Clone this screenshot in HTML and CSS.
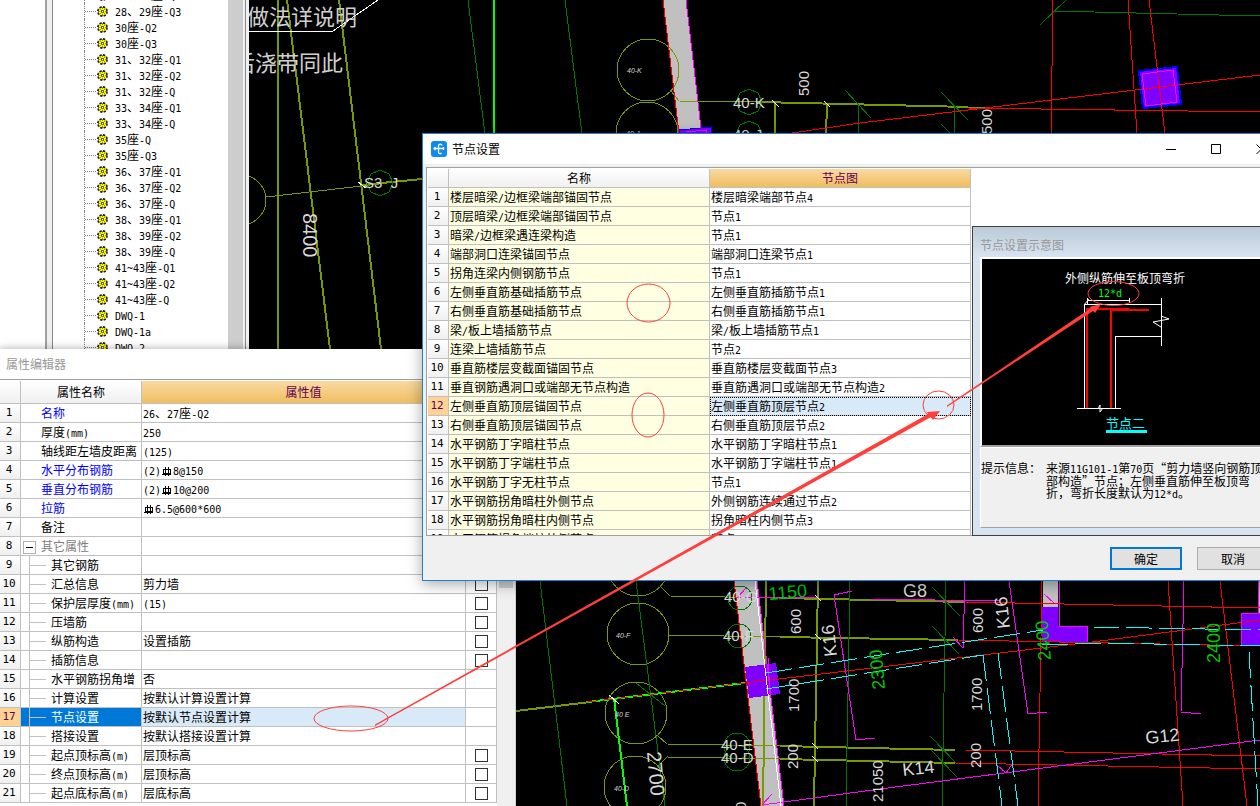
FILE: index.html
```html
<!DOCTYPE html>
<html lang="zh-CN">
<head>
    <meta charset="UTF-8">
    <meta name="viewport" content="width=device-width, initial-scale=1.0">
    <title>节点设置</title>
    <link rel="stylesheet" href="styles.css">
</head>
<body>
    <svg class="symbols" width="0" height="0">
        <symbol id="gear" viewBox="0 0 11 11">
            <circle cx="5.5" cy="5.5" r="4.5" fill="#ffff00" stroke="#222" stroke-width="2" stroke-dasharray="2.2 1.33"/>
            <circle cx="5.5" cy="5.5" r="3.6" fill="#ffff00"/>
            <path d="M5.5 1v9M1 5.5h9M2.500 2.500l6 6M8.500 2.500l-6 6" stroke="#6a6a00" stroke-width=".7"/>
            <circle cx="5.5" cy="5.5" r="2.4" fill="#ffff00"/>
            <rect x="4.5" y="4.5" width="2" height="2" fill="#fff" stroke="#444" stroke-width=".8"/>
        </symbol>
        <symbol id="rebar" viewBox="0 0 10 10">
            <path d="M1.5 2.5h7v4h-7zM3.5 0v9M6.500 0v9M0 7.500h9" fill="none" stroke="#000" shape-rendering="crispEdges"/>
        </symbol>
    </svg>

    <!-- drawing area -->
    <svg class="drawing" width="100%" height="100%">
        <!-- walls -->
        <g fill="#c0c0c0">
            <path d="M663 0L686 0L701 128L679 133Z"/>
            <path d="M734 581H757L784 806H761Z"/>
            <path d="M1043 560H1058V607H1043ZM1258 560H1270V613H1258Z"/>
        </g>

        <!-- axis lines -->
        <g class="olive">
            <path class="thick" d="M278 0V349M287 0L330 349M339 0L381 349"/>
            <circle cx="241" cy="200" r="25"/>
            <path d="M266 197L422 179"/>
            <path class="thick" d="M361 185L422 179"/>
            <circle cx="648" cy="70" r="31"/>
            <circle cx="647" cy="133" r="31"/>
            <path d="M671 91L679 101L760 102M968 107L988 107"/>
            <path class="thick" d="M760 102L968 107M775 103V134M827 105L826 134"/>
            <circle cx="638" cy="565" r="31"/>
            <circle cx="638" cy="634" r="31"/>
            <circle cx="636" cy="713" r="31"/>
            <circle cx="635" cy="787" r="31"/>
            <path d="M661 587L670 596L780 598M668 635L780 637M658 736L667 744L780 746M658 766L667 757L780 759"/>
            <path class="thick" d="M780 598L965 602M780 637L958 640M780 746L955 750M780 759L955 763"/>
            <path class="thick" d="M516 711L590 702M766 581L763 806M818 581L814 806"/>
        </g>

        <!-- grid -->
        <g class="green">
            <path d="M468 0L485 134M565 0L582 134M858 105V134M955 107L954 134"/>
            <path d="M845 90L871 118M941 92L968 120M941 124L951 134"/>
            <path d="M1053 11L1260 16M1040 25L1066 0"/>
            <path d="M540 581L567 806M636 581L665 806M850 581L846 806M946 581L942 806"/>
            <path d="M932 587L960 616M932 626L959 654M930 736L957 764M931 750L957 777M636 683L665 706"/>
            <path d="M380 170L389 174L393 183L389 192L380 196L371 192L367 183L371 174Z"/>
            <path d="M749 89L758 93L762 102L758 111L749 115L740 111L736 102L740 93Z"/>
            <path d="M749 121L758 125L762 134H736L740 125Z"/>
            <circle cx="740" cy="598" r="12"/>
            <circle cx="739" cy="636" r="12"/>
            <circle cx="737" cy="746" r="13"/>
            <circle cx="737" cy="758" r="13"/>
        </g>
        <path class="lime" d="M494 0V134M614 698L627 806"/>

        <!-- columns -->
        <g fill="#7f00ff">
            <path d="M1139 71L1177 67L1181 104L1143 108Z" stroke="#0000ff" stroke-width="2"/>
            <path d="M679 130L711 127V140H679Z" stroke="#0000ff"/>
            <path d="M745 667L776 663L780 694L749 698Z"/>
            <path d="M1042 607H1058V626H1087V642H1042Z"/>
            <path d="M1241 613H1260V646H1241Z"/>
        </g>

        <g class="red">
            <path d="M792 133L860 123L1260 75M968 108L1260 112M1053 0L1051 134M1128 0L1137 134M1149 0L1165 134"/>
            <path d="M745 683L1000 653L1100 641L1200 628L1260 620"/>
            <path d="M965 602L1260 608M958 640L1260 646M965 750L1260 756M955 763L1260 769"/>
            <path d="M1042 581L1038 806M1168 581L1183 806M1220 581L1247 806"/>
            <path d="M663 0L679 133M734 581L761 806"/>
        </g>
        <path class="lime" d="M588 702L745 683"/>
        <path class="red" stroke-dasharray="10 5" d="M588 702L745 683"/>

        <g class="magenta">
            <path d="M1142 74L1173 70L1177 102L1146 106Z"/>
            <path d="M686 0L701 128M686 132L706 130V134M757 581L784 806"/>
            <path d="M737 598L820 597M737 598L746 588M852 591L834 595L856 740L875 738"/>
            <path d="M762 805L880 789L1260 740M762 805L772 794"/>
            <path d="M870 599L1000 601M965 581L963 648L953 637M1009 581L1028 714L1047 712"/>
            <path d="M1184 581L1181 712L1201 714M997 765L1006 773L1013 763M1044 594L1054 603"/>
            <path d="M1059 581V626H1087V642M1241 646V613H1258V581M768 658L770 694"/>
        </g>

        <g class="cyan">
            <path d="M766 673L880 655L1043 630M766 689L880 671L983 655"/>
            <path d="M1093 627L1260 630M1042 645L1100 643L1260 646"/>
            <path d="M983 655L1002 806M998 653L1018 806M1249 652L1258 806"/>
        </g>

        <g class="white">
            <path d="M249 31H333L378 0M755 581L781 806"/>
            <path d="M358 182L366 188M772 100L779 107M824 101L830 107M609 695L619 704"/>
            <path d="M815 595L821 601M815 634L821 640M812 743L818 749M812 756L818 762"/>
        </g>

        <!-- drawing labels -->
        <g class="note">
            <text x="247" y="25">做法详说明</text>
            <text x="233" y="71">后浇带同此</text>
        </g>
        <g class="dim">
            <text x="364" y="188">S3&#160;&#160;J</text>
            <text x="733" y="108">40-K</text>
            <text x="733" y="140">40-J</text>
            <text x="724" y="602">40-G</text>
            <text x="723" y="641">40-F</text>
            <text x="721" y="750">40-E</text>
            <text x="721" y="763">40-D</text>
            <text transform="translate(809 96) rotate(-90)">500</text>
            <text transform="translate(992 134) rotate(-90)">500</text>
            <text transform="translate(801 634) rotate(-90)">600</text>
            <text transform="translate(799 712) rotate(-90)">1700</text>
            <text transform="translate(798 769) rotate(-90)">200</text>
            <text transform="translate(883 802) rotate(-90)">21050</text>
            <text transform="translate(983 633) rotate(-90)">600</text>
            <text transform="translate(982 711) rotate(-90)">1700</text>
            <text transform="translate(981 768) rotate(-90)">200</text>
            <text transform="translate(746 810) rotate(-90)">0</text>
        </g>
        <g class="dim mid">
            <text x="903" y="597">G8</text>
            <text transform="translate(1146 744) rotate(-6)">G12</text>
            <text transform="translate(903 776) rotate(-6)">K14</text>
            <text transform="translate(837 656) rotate(-96)">K16</text>
            <text transform="translate(1010 628) rotate(-96)">K16</text>
        </g>
        <g class="dim big">
            <text transform="translate(303 213) rotate(90)">8400</text>
            <text transform="translate(647 752) rotate(85)">2700</text>
        </g>
        <g class="dim mid lively">
            <text transform="translate(769 600) rotate(-5)">1150</text>
            <text transform="translate(885 689) rotate(-95)">2300</text>
            <text transform="translate(1051 660) rotate(-95)">2400</text>
            <text transform="translate(1220 663) rotate(-90)">2400</text>
        </g>
        <g class="dim tiny">
            <text x="627" y="73">40-K</text>
            <text x="626" y="136">40-J</text>
            <text x="616" y="638">40-F</text>
            <text x="615" y="717">40 E</text>
            <text x="614" y="791">40-D</text>
        </g>
    </svg>

    <!-- component list -->
    <aside class="sidebar">
        <div class="gutter"></div>
        <div class="splitter"></div>
        <ul class="tree" id="tree"></ul>
        <div class="scroll-thumb"></div>
        <div class="splitter right"></div>
    </aside>

    <!-- property editor -->
    <section class="props">
        <h2 class="props-title">属性编辑器</h2>
        <div class="props-body">
            <table class="grid props-grid">
                <colgroup><col class="c-no"><col class="c-name"><col><col class="c-check"></colgroup>
                <thead><tr><th></th><th>属性名称</th><th class="active">属性值</th><th></th></tr></thead>
                <tbody id="props"></tbody>
            </table>
            <div class="scroll"><div class="scroll-bar"></div></div>
        </div>
    </section>

    <!-- node settings dialog -->
    <section class="dialog">
        <header class="title-bar">
            <svg class="logo" width="16" height="16" viewBox="0 0 16 16">
                <rect width="16" height="16" rx="3" fill="#0c8cf0"/>
                <path d="M11 4.500C10.500 2.500 7.500 2.500 7.500 5V11C7.500 13 9.500 13 10.500 12M3 7.500H13M4.500 6L3 7.500L4.500 9M12.500 6V9" fill="none" stroke="#fff" stroke-width="1.300"/>
            </svg>
            <h1>节点设置</h1>
            <button class="win-btn" aria-label="最小化"><svg width="11" height="11"><path d="M0 5.500H10"/></svg></button>
            <button class="win-btn" aria-label="最大化"><svg width="11" height="11"><path d="M.5 .5H9.500V9.500H.5Z"/></svg></button>
            <button class="win-btn" aria-label="关闭"><svg width="11" height="11"><path d="M.5 .5L10 10M10 .5L.5 10"/></svg></button>
        </header>
        <div class="node-panel">
            <table class="grid node-grid">
                <colgroup><col class="c-no"><col class="c-half"><col class="c-half"></colgroup>
                <thead><tr><th></th><th>名称</th><th class="active">节点图</th></tr></thead>
                <tbody id="nodes"></tbody>
            </table>
        </div>
        <footer class="actions">
            <button class="btn primary">确定</button>
            <button class="btn">取消</button>
        </footer>

        <!-- preview window -->
        <div class="preview">
            <h2>节点设置示意图</h2>
            <svg class="figure" width="100%" height="190" viewBox="982 259 280 186" preserveAspectRatio="xMinYMin meet">
                <g fill="none" stroke="#fff" shape-rendering="crispEdges">
                    <path d="M1084.500 408V304.500H1161M1161.500 298V346M1161 336.500H1115.500V408M1077 408.500H1121"/>
                    <path d="M1087 300.500H1130M1087.500 298V304M1129.500 298V303"/>
                </g>
                <path d="M1161 316L1169 319L1153 322L1161 327M1098 409L1100 405V412L1103 408M1084 305L1089 299" fill="none" stroke="#fff"/>
                <path d="M1087 408V309H1129M1111 408V310H1149" fill="none" stroke="#f00" stroke-width="2" shape-rendering="crispEdges"/>
                <text x="1065" y="283" fill="#fff">外侧纵筋伸至板顶弯折</text>
                <text class="en" x="1098" y="297" fill="#0f0">12*d</text>
                <text class="caption" x="1106" y="428" fill="#0ff">节点二</text>
                <path d="M1106 430H1147V433H1106Z" fill="#0ff"/>
            </svg>
            <div class="tips">
                <span class="tips-label">提示信息：</span>
                <p id="tip">来源11G101-1第70页“剪力墙竖向钢筋顶
部构造”节点；左侧垂直筋伸至板顶弯
折，弯折长度默认为12*d。</p>
            </div>
        </div>
    </section>

    <!-- red pen marks -->
    <svg class="marks" width="100%" height="100%">
        <g fill="none" stroke="#ff3f3b" stroke-width="1">
            <ellipse cx="648.500" cy="303" rx="21.500" ry="19"/>
            <ellipse cx="648" cy="415" rx="16" ry="22"/>
            <ellipse cx="938.500" cy="405" rx="15.500" ry="14"/>
            <ellipse cx="351" cy="718.500" rx="37" ry="12.500"/>
            <ellipse cx="1113.500" cy="293.500" rx="25.500" ry="12"/>
        </g>
        <g fill="#ff3f3b">
            <path d="M375 724.500L928 414L927 412L940 411L933 420L931 417L375 726Z"/>
            <path d="M947 405.500L1091 308L1089 307L1101 304L1095 313L1093 311L947 407Z"/>
        </g>
    </svg>

    <script>
        const treeItems = [
            '28、29座-Q2', '28、29座-Q3', '30座-Q2', '30座-Q3', '31、32座-Q1', '31、32座-Q2', '31、32座-Q',
            '33、34座-Q1', '33、34座-Q', '35座-Q', '35座-Q3', '36、37座-Q1', '36、37座-Q2', '36、37座-Q',
            '38、39座-Q1', '38、39座-Q2', '38、39座-Q', '41~43座-Q1', '41~43座-Q2', '41~43座-Q',
            'DWQ-1', 'DWQ-1a', 'DWQ-2'
        ];

        // name, value, kind of name, has a check box
        const props = [
            ['名称', '26、27座-Q2', 'key', 0],
            ['厚度(mm)', '250', '', 0],
            ['轴线距左墙皮距离', '(125)', '', 1],
            ['水平分布钢筋', '(2)ф8@150', 'key', 1],
            ['垂直分布钢筋', '(2)ф10@200', 'key', 1],
            ['拉筋', 'ф6.5@600*600', 'key', 1],
            ['备注', '', '', 1],
            ['其它属性', '', 'group', 0],
            ['其它钢筋', '', 'child', 0],
            ['汇总信息', '剪力墙', 'child', 1],
            ['保护层厚度(mm)', '(15)', 'child', 1],
            ['压墙筋', '', 'child', 1],
            ['纵筋构造', '设置插筋', 'child', 1],
            ['插筋信息', '', 'child', 1],
            ['水平钢筋拐角增', '否', 'child', 0],
            ['计算设置', '按默认计算设置计算', 'child', 0],
            ['节点设置', '按默认节点设置计算', 'child', 0],
            ['搭接设置', '按默认搭接设置计算', 'child', 0],
            ['起点顶标高(m)', '层顶标高', 'child', 1],
            ['终点顶标高(m)', '层顶标高', 'child', 1],
            ['起点底标高(m)', '层底标高', 'child', 1]
        ];

        const nodes = [
            ['楼层暗梁/边框梁端部锚固节点', '楼层暗梁端部节点4'],
            ['顶层暗梁/边框梁端部锚固节点', '节点1'],
            ['暗梁/边框梁遇连梁构造', '节点1'],
            ['端部洞口连梁锚固节点', '端部洞口连梁节点1'],
            ['拐角连梁内侧钢筋节点', '节点1'],
            ['左侧垂直筋基础插筋节点', '左侧垂直筋插筋节点1'],
            ['右侧垂直筋基础插筋节点', '右侧垂直筋插筋节点1'],
            ['梁/板上墙插筋节点', '梁/板上墙插筋节点1'],
            ['连梁上墙插筋节点', '节点2'],
            ['垂直筋楼层变截面锚固节点', '垂直筋楼层变截面节点3'],
            ['垂直钢筋遇洞口或端部无节点构造', '垂直筋遇洞口或端部无节点构造2'],
            ['左侧垂直筋顶层锚固节点', '左侧垂直筋顶层节点2'],
            ['右侧垂直筋顶层锚固节点', '右侧垂直筋顶层节点2'],
            ['水平钢筋丁字暗柱节点', '水平钢筋丁字暗柱节点1'],
            ['水平钢筋丁字端柱节点', '水平钢筋丁字端柱节点1'],
            ['水平钢筋丁字无柱节点', '节点1'],
            ['水平钢筋拐角暗柱外侧节点', '外侧钢筋连续通过节点2'],
            ['水平钢筋拐角暗柱内侧节点', '拐角暗柱内侧节点3'],
            ['水平钢筋拐角端柱外侧节点', '节点3']
        ];

        // latin letters and digits take half the width of a Chinese character
        function format(text) {
            return text
                .replace(/[\x21-\x7e]+/g, s => `<span class="en">${s}</span>`)
                .replace(/ф/g, '<svg class="rebar" width="10" height="10"><use href="#rebar"/></svg>');
        }

        document.getElementById('tree').innerHTML = treeItems.map(t =>
            `<li><svg class="gear" width="11" height="11"><use href="#gear"/></svg><span>${format(t)}</span></li>`).join('');

        document.getElementById('props').innerHTML = props.map(([name, value, kind, check], i) => `
            <tr class="${i === 16 ? 'selected' : ''}">
                <th class="en">${i + 1}</th>
                <td class="name ${kind}">${kind === 'group' ? '<button class="fold" aria-label="折叠"></button>' : ''}${format(name)}</td>
                <td class="value">${format(value)}</td>
                <td class="check">${check ? `<input type="checkbox" aria-label="${name}">` : ''}</td>
            </tr>`).join('');

        document.getElementById('nodes').innerHTML = nodes.map(([name, value], i) => `
            <tr class="${i === 11 ? 'selected' : ''}">
                <th class="en">${i + 1}</th><td class="name">${format(name)}</td><td class="value">${format(value)}</td>
            </tr>`).join('');

        const tip = document.getElementById('tip');
        tip.innerHTML = format(tip.textContent);
    </script>
</body>
</html>
```
FILE: styles.css
```css
* {
    box-sizing: border-box;
}

body {
    margin: 0;
    height: 100vh;
    overflow: hidden;
    position: relative;
    background: #000;
    color: #000;
    font-family: "Noto Sans CJK SC", sans-serif;
    font-size: 12px;
    line-height: 16px;
}

h1, h2, p, ul {
    margin: 0;
    padding: 0;
    font-size: 12px;
    font-weight: normal;
}

button {
    font-family: inherit;
    font-size: 12px;
    padding: 0;
}

.en {
    font-family: "DejaVu Sans Mono", monospace;
    font-size: 10px;
    line-height: 10px;
}

.symbols, .drawing, .marks {
    position: absolute;
    left: 0;
    top: 0;
}

.marks {
    pointer-events: none;
}

/* drawing */
.drawing path, .drawing circle {
    shape-rendering: crispEdges;
}

.olive, .green, .red, .magenta, .cyan, .white, .lime {
    fill: none;
    stroke-width: 1;
}

.olive { stroke: #789a00; }
.green { stroke: #007800; }
.red { stroke: #ff0000; }
.magenta { stroke: #ff00ff; }
.white { stroke: #ffffff; }

.olive .thick {
    stroke-width: 2;
}

.lime {
    stroke: #00ff00;
    stroke-width: 2;
}

.cyan {
    stroke: #00ffff;
    stroke-dasharray: 26 7;
}

.note {
    fill: #d0d0d0;
    font-size: 22px;
}

.dim {
    fill: #d8d8d8;
    font-family: "Liberation Sans", sans-serif;
    font-size: 15px;
}

.dim.mid { font-size: 18px; }
.dim.big { font-size: 20px; }
.dim.lively { fill: #00c800; }

.dim.tiny {
    font-size: 7px;
    font-style: italic;
}

/* component tree */
.sidebar {
    position: absolute;
    left: 0;
    top: 0;
    width: 249px;
    height: 349px;
    display: flex;
    overflow: hidden;
    background: #fff;
}

.gutter {
    width: 45px;
}

.splitter {
    width: 8px;
    background: #f0f0f0;
    border-left: 2px solid #a0a0a0;
    border-right: 1px solid #828790;
}

.splitter.right {
    width: 6px;
    border-left: 2px solid #f0f0f0;
    border-right: 3px solid #f0f0f0;
    background: #828790;
}

.tree {
    flex: 1;
    list-style: none;
    margin-top: -13px;
    padding-left: 31px;
}

.tree li {
    height: 16px;
    display: flex;
    align-items: center;
    border-left: 1px dotted #808080;
    white-space: nowrap;
}

.tree li::before {
    content: "";
    width: 11px;
    border-top: 1px dotted #808080;
}

.gear {
    margin: 0 7px 0 1px;
}

.scroll-thumb {
    width: 15px;
    background: #cdcdcd;
}

/* grids */
.grid {
    border-collapse: separate;
    border-spacing: 0;
    table-layout: fixed;
}

.grid th, .grid td {
    height: 19px;
    padding: 0 0 0 2px;
    line-height: 16px;
    border-right: 1px solid #c0c0c0;
    border-bottom: 1px solid #c0c0c0;
    text-align: left;
    font-weight: normal;
    white-space: nowrap;
    overflow: hidden;
}

.grid td {
    padding-left: 1px;
}

.grid th {
    padding: 0;
    text-align: center;
    background: linear-gradient(#ffffff, #f0f0f0);
}

.grid th.en {
    font-size: 11px;
    padding-right: 2px;
}

.grid th.active {
    background: linear-gradient(#f9d9a2, #f0be5f);
    color: #60005a;
}

.grid .selected th {
    background: #fdd292;
    color: #60005a;
}

.grid .selected .value {
    background: #d8eaf8;
}

.c-no { width: 21px; }

/* property editor */
.props {
    position: absolute;
    left: 0;
    top: 349px;
    bottom: 0;
    width: 516px;
    display: flex;
    flex-direction: column;
    background: #fff;
    border-right: 1px solid #d0d0d0;
    box-shadow: 0 0 8px rgba(0, 0, 0, 0.35);
}

.props-title {
    height: 31px;
    padding: 7px 6px;
    color: #999;
    border-bottom: 1px solid #a0a0a0;
}

.props-body {
    flex: 1;
    display: flex;
    overflow: hidden;
    padding-top: 1px;
}

.props-grid {
    width: 497px;
    height: max-content;
}

.props-grid .c-name { width: 121px; }
.props-grid .c-check { width: 31px; }

.props-grid thead th {
    height: 23px;
}

.props-grid .name {
    padding-left: 20px;
}

.props-grid .key {
    color: #0000ff;
}

.props-grid .group {
    padding-left: 2px;
    color: #808080;
}

/* branch of the tree in front of the name */
.props-grid .child {
    padding-left: 30px;
    background: linear-gradient(#c0c0c0, #c0c0c0) 8px 9px / 17px 1px no-repeat,
                linear-gradient(#c0c0c0, #c0c0c0) 8px 0 / 1px 100% no-repeat;
}

.props-grid .selected .name {
    background-color: #0078d7;
    color: #fff;
}

.props-grid .check {
    padding: 0;
    text-align: center;
}

.props-grid input {
    appearance: none;
    display: block;
    width: 13px;
    height: 13px;
    margin: 0 auto;
    border: 1px solid #333;
    background: #fff;
}

.props-grid input:checked {
    background: #333;
}

.fold {
    width: 13px;
    height: 13px;
    margin-right: 5px;
    vertical-align: middle;
    border: 1px solid #b0b0b0;
    background: linear-gradient(#000, #000) center / 7px 1px no-repeat #fff;
}

.rebar {
    vertical-align: -2px;
    margin: 0 1px;
}

.scroll {
    flex: 1;
    background: #f0f0f0;
    padding: 17px 2px 0;
}

.scroll-bar {
    height: 190px;
    background: #cdcdcd;
}

/* dialog */
.dialog {
    position: absolute;
    left: 422px;
    right: -25px;
    top: 133px;
    bottom: 225px;
    display: flex;
    flex-direction: column;
    background: #f0f0f0;
    border: 1px solid #1883d7;
    box-shadow: 0 3px 14px rgba(0, 0, 0, 0.35);
}

.title-bar {
    height: 30px;
    display: flex;
    align-items: center;
    background: #fff;
    padding-left: 8px;
}

.title-bar h1 {
    flex: 1;
    margin-left: 5px;
}

.win-btn {
    width: 45px;
    height: 28px;
    border: none;
    background: none;
}

.win-btn svg {
    display: block;
    margin: 0 auto;
    fill: none;
    stroke: #000;
}

.node-panel {
    flex: 1;
    margin: 3px 3px 0;
    padding: 1px 0 1px 1px;
    overflow: hidden;
    background: #fff;
    border: 1px solid #a0a0a0;
}

.node-grid {
    width: 543px;
}

.node-grid .c-half { width: 261px; }

.node-grid .name {
    background: #ffffe1;
}

.node-grid .selected .value {
    outline: 1px dotted #000;
    outline-offset: -1px;
}

.actions {
    height: 44px;
    display: flex;
    justify-content: flex-end;
    align-items: center;
    gap: 15px;
    padding-right: 15px;
}

.btn {
    width: 72px;
    height: 23px;
    border: 1px solid #adadad;
    background: #e1e1e1;
}

.btn.primary {
    border: 2px solid #0078d7;
}

/* preview window */
.preview {
    position: absolute;
    left: 549px;
    right: 4px;
    top: 92px;
    bottom: 44px;
    display: flex;
    flex-direction: column;
    padding: 0 7px 7px;
    background: linear-gradient(#bccad8, #d7e3f0 30px);
    border: 1px solid #404040;
}

.preview h2 {
    height: 30px;
    padding-top: 10px;
    color: #999;
}

.figure {
    flex: none;
    background: #000;
    border: 2px solid #fff;
    border-bottom-color: #a0a0a0;
}

.figure .caption {
    font-size: 13px;
}

.tips {
    flex: 1;
    display: flex;
    align-items: flex-start;
    padding-top: 14px;
    background: #f0f0f0;
    border: 1px solid #fff;
    border-bottom-color: #a0a0a0;
    line-height: 12px;
}

.tips-label {
    width: 65px;
}

.tips p {
    white-space: pre;
}
```
